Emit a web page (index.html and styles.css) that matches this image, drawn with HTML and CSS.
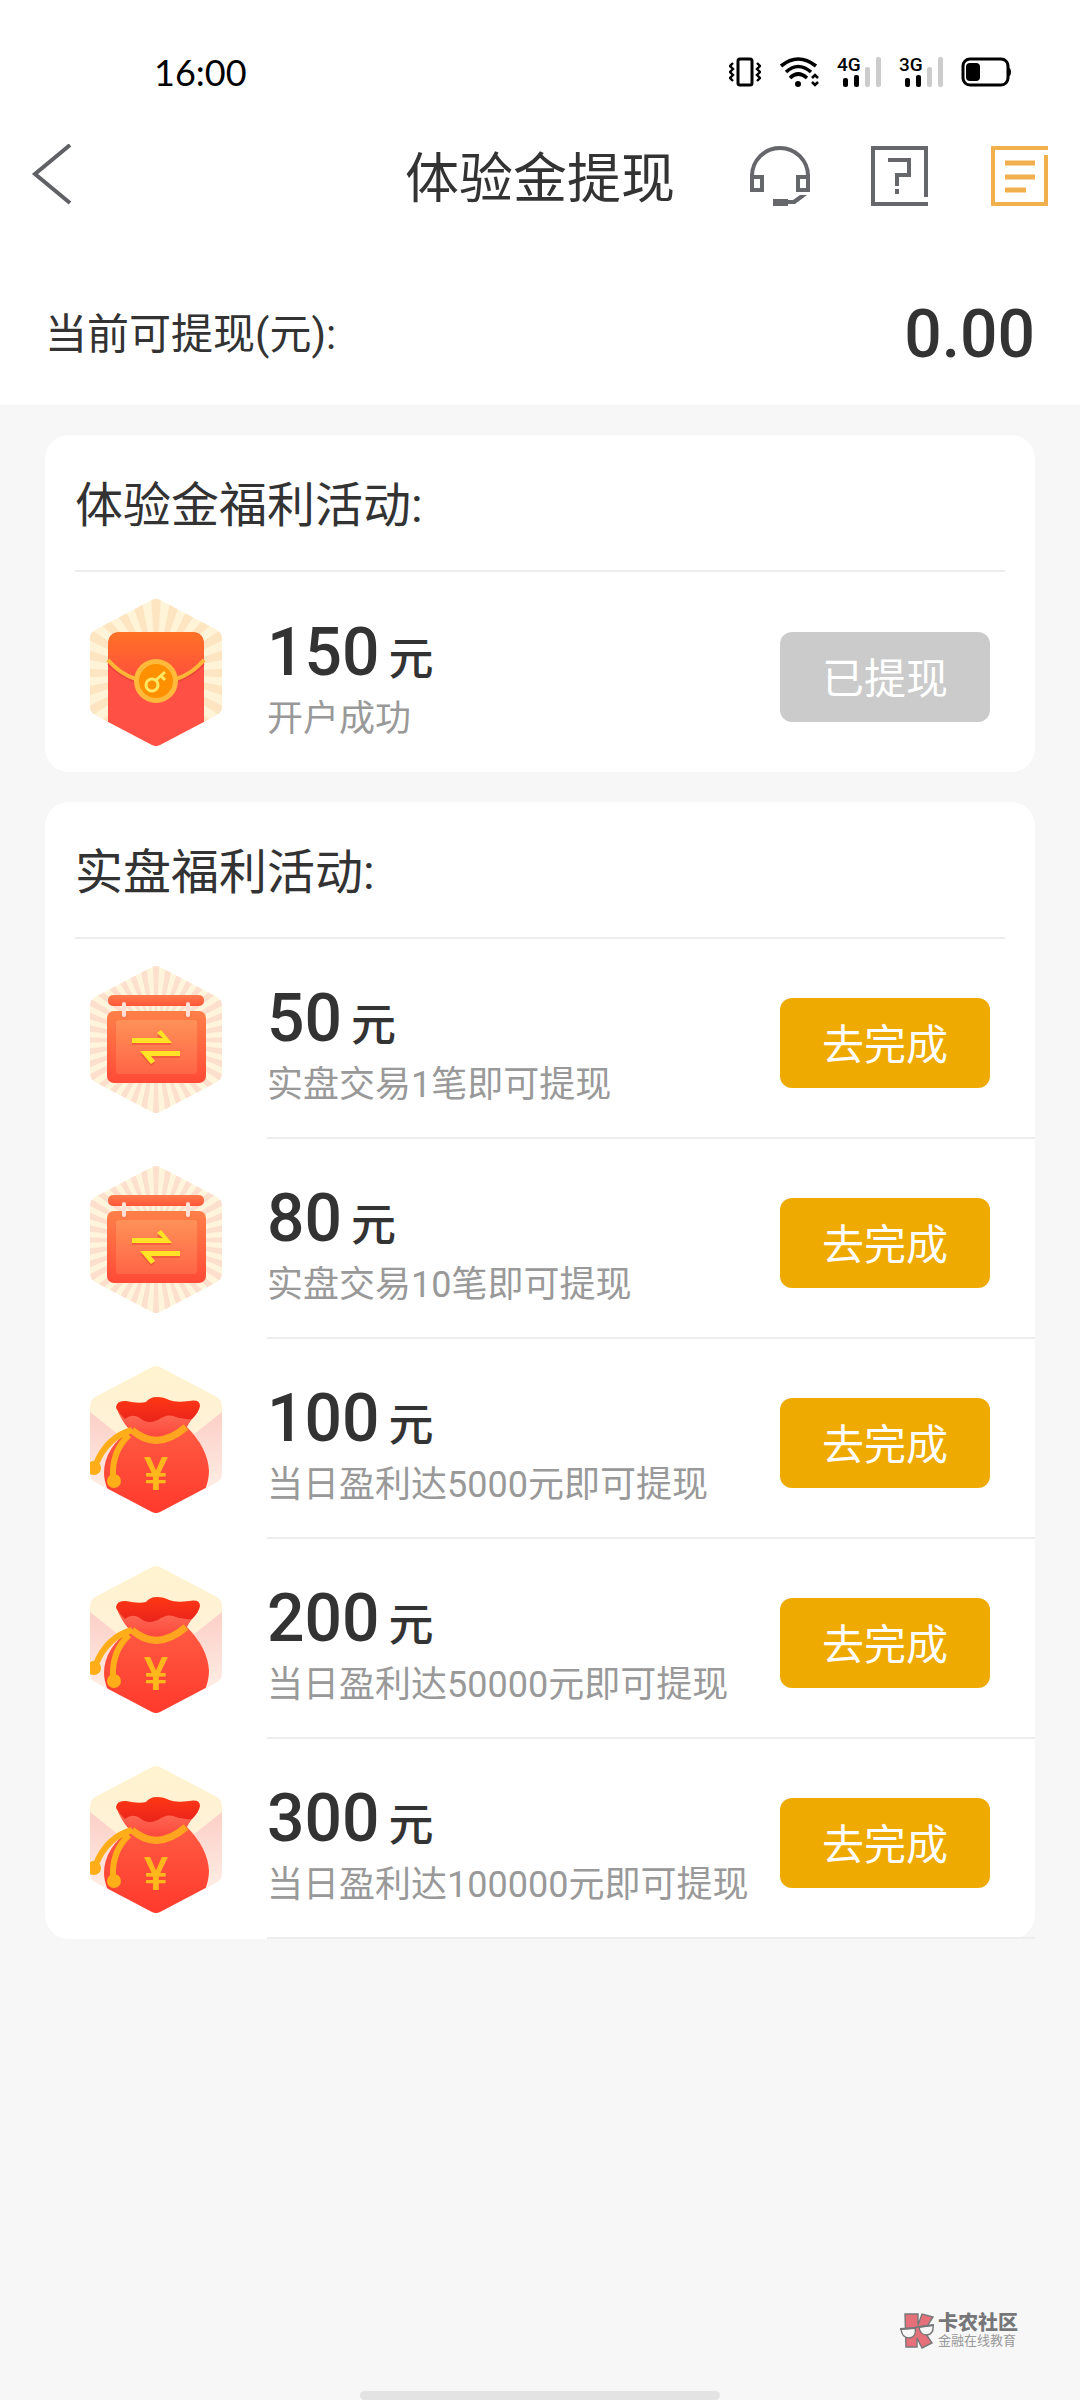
FILE: index.html
```html
<!DOCTYPE html>
<html lang="zh-CN">
<head>
    <meta charset="UTF-8">
    <meta name="viewport" content="width=device-width, initial-scale=1.0">
    <title>体验金提现</title>
    <link rel="stylesheet" href="styles.css">
</head>
<body>
    <!-- Shared artwork for the reward rows -->
    <svg class="sprite" aria-hidden="true">
        <defs>
            <clipPath id="hex">
                <path d="M62 1Q66 -1 70 1L127 31Q132 34 132 40V107Q132 113 127 116L70 146Q66 148 62 146L5 116Q0 113 0 107V40Q0 34 5 31Z"/>
            </clipPath>
            <linearGradient id="flapFill" x1="0" y1="0" x2="0" y2="1">
                <stop offset="0" stop-color="#ff7225"/>
                <stop offset="1" stop-color="#ff4f3d"/>
            </linearGradient>
            <linearGradient id="barFill" x1="0" y1="0" x2="0" y2="1">
                <stop offset="0" stop-color="#ff7a4c"/>
                <stop offset="1" stop-color="#ff5738"/>
            </linearGradient>
            <linearGradient id="boardFill" x1="0" y1="0" x2="0" y2="1">
                <stop offset="0" stop-color="#ff8049"/>
                <stop offset="1" stop-color="#ff4a37"/>
            </linearGradient>
            <linearGradient id="panelFill" x1="0" y1="0" x2="0" y2="1">
                <stop offset="0" stop-color="#ff9158"/>
                <stop offset="1" stop-color="#ff6546"/>
            </linearGradient>
            <linearGradient id="bagFill" x1="0" y1="0" x2="0" y2="1">
                <stop offset="0" stop-color="#ff5b43"/>
                <stop offset="1" stop-color="#ff3a2d"/>
            </linearGradient>
            <linearGradient id="mouthFill" x1="0" y1="0" x2="0" y2="1">
                <stop offset="0" stop-color="#ff3815"/>
                <stop offset="1" stop-color="#e9231b"/>
            </linearGradient>
            <linearGradient id="neckFill" x1="0" y1="0" x2="0" y2="1">
                <stop offset="0" stop-color="#ff6b56"/>
                <stop offset="1" stop-color="#fb4238"/>
            </linearGradient>
            <linearGradient id="sideFill" x1="0" y1="0" x2="0" y2="1">
                <stop offset="0" stop-color="#fbcfc6"/>
                <stop offset="1" stop-color="#fff6ee"/>
            </linearGradient>
            <linearGradient id="creamFill" x1="0" y1="0" x2="0" y2="1">
                <stop offset="0" stop-color="#fff3cf"/>
                <stop offset="1" stop-color="#fff0e2"/>
            </linearGradient>
        </defs>

        <symbol id="icon-envelope" viewBox="0 0 132 147">
            <g clip-path="url(#hex)">
                <rect width="132" height="147" fill="#fff3d8"/>
                <circle cx="66" cy="74" r="50" fill="none" stroke="#fee5c2" stroke-width="100" pathLength="48" stroke-dasharray="1 1" stroke-dashoffset="0.5"/>
                <path d="M18 46Q18 33 31 33H101Q114 33 114 46V147H18Z" fill="#ff5046"/>
                <path d="M18 46Q18 33 31 33H101Q114 33 114 46V61Q102 74 88 80H44Q30 75 18 61Z" fill="url(#flapFill)"/>
                <path d="M18 65Q30 78 46 83M114 65Q102 78 86 83" fill="none" stroke="#dd382d" stroke-width="2" opacity=".5"/>
                <path d="M18 61Q30 75 46 80M114 61Q102 75 86 80" fill="none" stroke="#ffb638" stroke-width="4"/>
                <circle cx="66" cy="82" r="22" fill="#ffba3c"/>
                <circle cx="66" cy="82" r="17" fill="#ff9100"/>
                <circle cx="62" cy="86" r="6" fill="none" stroke="#ffe866" stroke-width="3"/>
                <path d="M66 81L75 73M71 77L75 81" fill="none" stroke="#ffe866" stroke-width="3"/>
            </g>
        </symbol>

        <symbol id="icon-board" viewBox="0 0 132 147">
            <g clip-path="url(#hex)">
                <rect width="132" height="147" fill="#fff5dc"/>
                <circle cx="66" cy="74" r="50" fill="none" stroke="#fddfcd" stroke-width="100" pathLength="72" stroke-dasharray="1 1" stroke-dashoffset="0.5"/>
            </g>
            <rect x="18" y="29" width="96" height="11" rx="5" fill="url(#barFill)"/>
            <rect x="17" y="45" width="99" height="72" rx="7" fill="url(#boardFill)"/>
            <rect x="26" y="54" width="81" height="54" rx="3" fill="url(#panelFill)"/>
            <path d="M34 38V49M98 38V49" stroke="#ffe1d8" stroke-width="4" stroke-linecap="round"/>
            <path d="M42 75H72L67 70L71 66L82 79H42ZM90 88H50L61 100L65 97L61 92H90Z" fill="#e8432a" opacity=".5"/>
            <path d="M42 72H73L67 67L71 64L82 77H42ZM90 85H50L61 98L65 95L61 90H90Z" fill="#ffe324"/>
        </symbol>

        <symbol id="icon-bag" viewBox="0 0 132 147">
            <g clip-path="url(#hex)">
                <rect width="132" height="147" fill="url(#creamFill)"/>
                <path d="M0 46L48 84V147H0ZM132 46L84 84V147H132Z" fill="url(#sideFill)"/>
                <path d="M42 62Q14 82 14 107Q14 122 30 147H104Q119 121 119 105Q118 82 96 60Z" fill="url(#bagFill)"/>
                <path d="M28 46Q34 59 42 66Q68 86 97 61Q99 56 108 46Z" fill="url(#neckFill)"/>
                <path d="M26 41Q27 34 36 35Q49 38 56 36Q60 31 67 31Q74 31 79 34Q86 37 99 35Q110 33 110 40Q109 46 102 53Q92 54 83 50Q76 48 68 54Q57 59 50 52Q42 47 35 53Q26 44 26 41Z" fill="url(#mouthFill)"/>
                <path d="M42 64Q67 86 96 61" fill="none" stroke="#ffa51f" stroke-width="7"/>
                <path d="M42 64Q17 71 6 98M39 69Q22 85 23 110" fill="none" stroke="#ffad19" stroke-width="6"/>
                <circle cx="4" cy="102" r="7" fill="#ffad19"/>
                <circle cx="24" cy="115" r="7" fill="#ffad19"/>
            </g>
        </symbol>
    </svg>

    <div class="page">
        <header class="header">
            <!-- Phone status bar -->
            <div class="status-bar">
                <span class="status-time">16:00</span>
                <div class="status-icons">
                    <svg width="32" height="32" viewBox="0 0 32 32" fill="none" stroke="#000">
                        <rect x="9" y="3" width="14" height="26" rx="2" stroke-width="3"/>
                        <path d="M4 7L1 10L4 13L1 16L4 19L1 22L4 25M28 7L31 10L28 13L31 16L28 19L31 22L28 25" stroke-width="2.4"/>
                    </svg>
                    <svg width="40" height="32" viewBox="0 0 40 32" fill="none" stroke="#000" stroke-width="3.6">
                        <path d="M2 10Q19 -4 37 10M7 16Q19 5 32 16M11 22Q19 14 28 22"/>
                        <circle cx="19" cy="28" r="3" fill="#000" stroke="none"/>
                        <path d="M33 22L36 19L39 22M33 26L36 29L39 26" stroke-width="2.6"/>
                    </svg>
                    <svg width="44" height="44" viewBox="0 -6 44 44">
                        <text x="0" y="15" class="signal-label">4G</text>
                        <rect x="6" y="22" width="5" height="9" rx="2"/>
                        <rect x="17" y="19" width="5" height="12" rx="2"/>
                        <rect x="28" y="11" width="5" height="20" rx="2" fill="#ccc"/>
                        <rect x="39" y="1" width="5" height="30" rx="2" fill="#ccc"/>
                    </svg>
                    <svg width="44" height="44" viewBox="0 -6 44 44">
                        <text x="0" y="15" class="signal-label">3G</text>
                        <rect x="6" y="22" width="5" height="9" rx="2"/>
                        <rect x="17" y="19" width="5" height="12" rx="2"/>
                        <rect x="28" y="11" width="5" height="20" rx="2" fill="#ccc"/>
                        <rect x="39" y="1" width="5" height="30" rx="2" fill="#ccc"/>
                    </svg>
                    <svg width="50" height="32" viewBox="0 0 50 32">
                        <rect x="2" y="3" width="45" height="26" rx="7" fill="none" stroke="#000" stroke-width="3"/>
                        <rect x="5" y="7" width="14" height="18" rx="4"/>
                        <path d="M47 11Q50 12 50 16Q50 20 47 21Z"/>
                    </svg>
                </div>
            </div>

            <!-- Title bar -->
            <nav class="nav">
                <button class="nav-button" type="button" aria-label="返回">
                    <svg width="42" height="64" viewBox="0 0 42 64">
                        <path d="M40 1L5 30L40 59" fill="none" stroke="#606165" stroke-width="4"/>
                    </svg>
                </button>
                <h1 class="nav-title">体验金提现</h1>
                <div class="nav-actions">
                    <button class="nav-button" type="button" aria-label="客服">
                        <svg width="60" height="60" viewBox="0 0 60 60" fill="none" stroke="#66676b" stroke-width="4">
                            <path d="M2 30A28 28 0 0 1 58 30"/>
                            <path d="M2 28V44H12V31H2M58 28V44H48V31H58"/>
                            <path d="M23 53H38V60H23Z" fill="#66676b" stroke="none"/>
                            <path d="M38 54H43L50 49H57L45 58H38Z" fill="#66676b" stroke="none"/>
                        </svg>
                    </button>
                    <button class="nav-button" type="button" aria-label="帮助">
                        <svg width="60" height="60" viewBox="0 0 60 60" fill="none" stroke="#66676b" stroke-width="4">
                            <path d="M56 51V2H3V58H58"/>
                            <path d="M18 14H39V29H27V40M27 43V48"/>
                        </svg>
                    </button>
                    <button class="nav-button" type="button" aria-label="记录">
                        <svg width="60" height="60" viewBox="0 0 60 60" fill="none" stroke="#f1b04d" stroke-width="4">
                            <path d="M58 2H3V58H56V9"/>
                            <path d="M15 17H45M15 31H45M15 44H36" stroke-width="5"/>
                        </svg>
                    </button>
                </div>
            </nav>

            <div class="balance">
                <span class="balance-label">当前可提现(元):</span>
                <span class="balance-value">0.00</span>
            </div>
        </header>

        <main class="content">
            <!-- Trial fund rewards -->
            <section class="card">
                <h2 class="card-title">体验金福利活动:</h2>
                <ul class="reward-list">
                    <li class="reward">
                        <svg class="reward-icon" viewBox="0 0 132 147"><use href="#icon-envelope"/></svg>
                        <div class="reward-body">
                            <div class="reward-text">
                                <p class="amount">150<span class="unit">元</span></p>
                                <p class="desc">开户成功</p>
                            </div>
                            <button class="action action-done" type="button" disabled>已提现</button>
                        </div>
                    </li>
                </ul>
            </section>

            <!-- Live trading rewards -->
            <section class="card">
                <h2 class="card-title">实盘福利活动:</h2>
                <ul class="reward-list reward-list-lined">
                    <li class="reward">
                        <svg class="reward-icon" viewBox="0 0 132 147"><use href="#icon-board"/></svg>
                        <div class="reward-body">
                            <div class="reward-text">
                                <p class="amount">50<span class="unit">元</span></p>
                                <p class="desc">实盘交易1笔即可提现</p>
                            </div>
                            <button class="action" type="button">去完成</button>
                        </div>
                    </li>
                    <li class="reward">
                        <svg class="reward-icon" viewBox="0 0 132 147"><use href="#icon-board"/></svg>
                        <div class="reward-body">
                            <div class="reward-text">
                                <p class="amount">80<span class="unit">元</span></p>
                                <p class="desc">实盘交易10笔即可提现</p>
                            </div>
                            <button class="action" type="button">去完成</button>
                        </div>
                    </li>
                    <li class="reward">
                        <svg class="reward-icon" viewBox="0 0 132 147">
                            <use href="#icon-bag"/>
                            <text x="66" y="124" text-anchor="middle" class="bag-yen">¥</text>
                        </svg>
                        <div class="reward-body">
                            <div class="reward-text">
                                <p class="amount">100<span class="unit">元</span></p>
                                <p class="desc">当日盈利达5000元即可提现</p>
                            </div>
                            <button class="action" type="button">去完成</button>
                        </div>
                    </li>
                    <li class="reward">
                        <svg class="reward-icon" viewBox="0 0 132 147">
                            <use href="#icon-bag"/>
                            <text x="66" y="124" text-anchor="middle" class="bag-yen">¥</text>
                        </svg>
                        <div class="reward-body">
                            <div class="reward-text">
                                <p class="amount">200<span class="unit">元</span></p>
                                <p class="desc">当日盈利达50000元即可提现</p>
                            </div>
                            <button class="action" type="button">去完成</button>
                        </div>
                    </li>
                    <li class="reward">
                        <svg class="reward-icon" viewBox="0 0 132 147">
                            <use href="#icon-bag"/>
                            <text x="66" y="124" text-anchor="middle" class="bag-yen">¥</text>
                        </svg>
                        <div class="reward-body">
                            <div class="reward-text">
                                <p class="amount">300<span class="unit">元</span></p>
                                <p class="desc">当日盈利达100000元即可提现</p>
                            </div>
                            <button class="action" type="button">去完成</button>
                        </div>
                    </li>
                </ul>
            </section>
        </main>

        <footer class="footer">
            <div class="brand">
                <svg width="34" height="36" viewBox="0 0 34 36" stroke="#77777a" stroke-width="1.4">
                    <path d="M5 1H18V12L22 1L33 4L24 18L32 30L22 35L17 25V34H6Z" fill="#e5707a"/>
                    <path d="M1 16L15 15Q17 24 9 25Q2 25 1 16ZM19 14L33 12Q34 21 27 22Q20 22 19 14Z" fill="#f7f7f7"/>
                    <path d="M0 16L15 15Q17 13 19 14L34 12" fill="none" stroke-width="2"/>
                </svg>
                <div class="brand-text">
                    <p class="brand-name">卡农社区</p>
                    <p class="brand-slogan">金融在线教育</p>
                </div>
            </div>
            <div class="home-bar"></div>
        </footer>
    </div>
</body>
</html>
```
FILE: styles.css
```css
/* Basic page styling */
* {
    box-sizing: border-box;
    margin: 0;
    padding: 0;
}

body {
    font-family: Roboto, "Noto Sans CJK SC", sans-serif;
    color: #333;
    background-color: #f7f7f7;
}

button {
    font-family: inherit;
    border: none;
    background: none;
}

svg {
    display: block;
}

.sprite {
    position: absolute;
    width: 0;
    height: 0;
}

.page {
    display: flex;
    flex-direction: column;
    min-height: 100vh;
}

.header {
    background-color: #fff;
}

/* Phone status bar */
.status-bar {
    display: flex;
    justify-content: space-between;
    align-items: center;
    height: 104px;
    padding: 40px 69px 0 154px;
}

.status-time {
    font-family: Lato, sans-serif;
    font-size: 36px;
    color: #000;
}

.status-icons {
    display: flex;
    align-items: center;
    gap: 18px;
}

.signal-label {
    font-size: 19px;
    font-weight: 500;
}

/* Title bar */
.nav {
    display: grid;
    grid-template-columns: 1fr auto 1fr;
    align-items: center;
    height: 144px;
    padding: 0 30px;
}

.nav-title {
    padding-top: 8px;
    font-size: 54px;
    font-weight: 400;
    line-height: 80px;
}

.nav-button {
    justify-self: start;
}

.nav-actions {
    display: flex;
    justify-content: flex-end;
    gap: 60px;
}

/* Withdrawable balance */
.balance {
    display: flex;
    justify-content: space-between;
    align-items: center;
    height: 157px;
    padding: 16px 45px 0;
}

.balance-label {
    padding-bottom: 8px;
    font-size: 42px;
}

.balance-value {
    font-size: 66px;
    font-weight: 500;
}

/* Cards */
.content {
    display: flex;
    flex-direction: column;
    gap: 30px;
    padding: 30px 45px;
}

.card {
    background-color: #fff;
    border-radius: 24px;
}

.card-title {
    margin: 0 30px;
    padding-top: 6px;
    border-bottom: 2px solid #ededed;
    font-size: 48px;
    font-weight: 400;
    line-height: 129px;
}

.reward-list {
    list-style: none;
}

.reward {
    display: flex;
    align-items: center;
    gap: 45px;
    padding-left: 45px;
}

.reward-icon {
    flex: none;
    width: 132px;
    height: 147px;
}

.reward-body {
    flex: 1;
    display: flex;
    justify-content: space-between;
    align-items: center;
    height: 200px;
    padding: 9px 45px 0 0;
}

/* The line starts at the text and runs to the card edge */
.reward-list-lined .reward-body {
    border-bottom: 2px solid #ededed;
}

.reward-text {
    padding-top: 6px;
}

.amount {
    font-size: 66px;
    font-weight: 500;
    line-height: 78px;
}

.unit {
    margin-left: 9px;
    font-size: 45px;
    line-height: 1;
}

.desc {
    font-size: 36px;
    line-height: 54px;
    color: #999;
}

.action {
    width: 210px;
    height: 90px;
    padding-bottom: 3px;
    border-radius: 12px;
    background-color: #efaa00;
    color: #fff;
    font-size: 42px;
}

.action-done {
    background-color: #cbcbcb;
}

/* Coin symbol on the money bag */
.bag-yen {
    font-size: 46px;
    font-weight: 500;
    fill: #ffb81c;
}

/* Brand mark and home bar */
.footer {
    display: flex;
    flex-direction: column;
    gap: 42px;
    margin-top: auto;
}

.brand {
    display: flex;
    align-items: center;
    align-self: flex-end;
    gap: 4px;
    margin-right: 62px;
}

.brand-name {
    font-size: 20px;
    font-weight: 900;
    line-height: 20px;
    color: #77777a;
}

.brand-slogan {
    font-size: 13px;
    line-height: 16px;
    color: #999;
}

.home-bar {
    align-self: center;
    width: 360px;
    height: 9px;
    border-radius: 5px;
    background-color: #e3e3e3;
}
```
